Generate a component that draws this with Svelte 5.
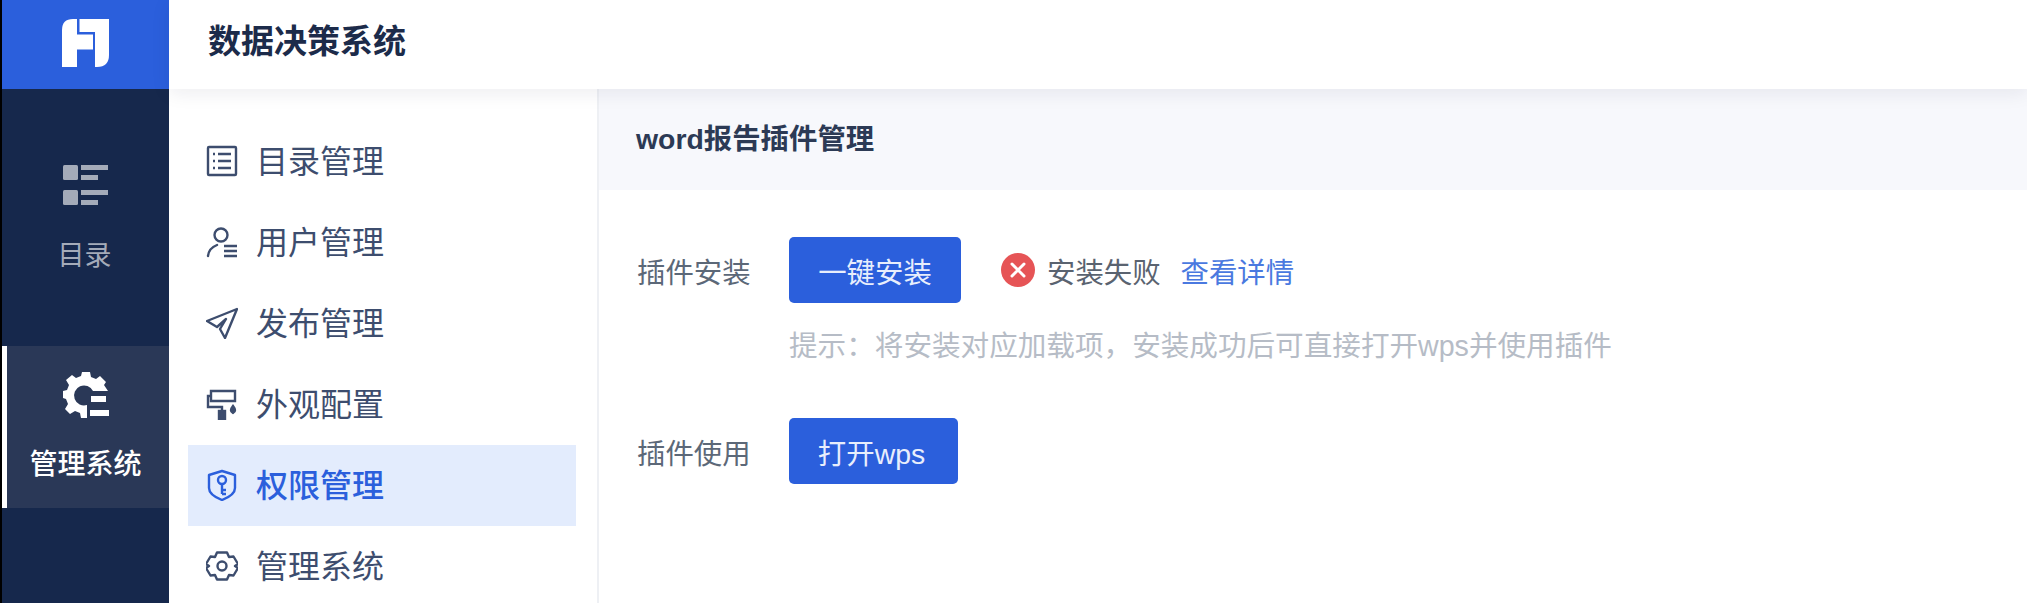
<script lang="ts">
	const menu = [
		{ key: 'catalog', label: '目录管理' },
		{ key: 'user', label: '用户管理' },
		{ key: 'publish', label: '发布管理' },
		{ key: 'theme', label: '外观配置' },
		{ key: 'auth', label: '权限管理', active: true },
		{ key: 'system', label: '管理系统' }
	];
</script>

<div class="app">
	<aside class="rail">
		<div class="logo">
			<svg width="48" height="48" viewBox="0 0 48 48" fill="#fff">
				<path d="M15 0V15.500H31V30.500H15V48H0V11Q0 0 11 0Z" />
				<path d="M17.500 0H47V36Q47 48 35 48H33V13H17.500Z" />
			</svg>
		</div>
		<nav class="rail-nav">
			<div class="rail-item">
				<svg width="46" height="42" viewBox="0 0 46 42" fill="#a4abb9">
					<rect x="1" y="1" width="15" height="15" rx="1.500" />
					<rect x="1" y="26" width="15" height="15" rx="1.500" />
					<rect x="19" y="1" width="27" height="5" />
					<rect x="19" y="11" width="17" height="5" />
					<rect x="19" y="26" width="27" height="5" />
					<rect x="19" y="36" width="17" height="5" />
				</svg>
				<span>目录</span>
			</div>
			<div class="rail-item active">
				<svg width="46" height="46" viewBox="0 0 46 46" fill="#fff">
					<path d="M19 0H27L28 5L33 7L37 4L43 10L41 13L45 19H30A10 10 0 1 0 24 33V46H18L17 41L12 39L7 42L2 37L5 32L3 27L0 26V19L4 18L6 13L3 8L9 3L13 6L18 4Z" />
					<rect x="28" y="24" width="15" height="6" />
					<rect x="27" y="38" width="19" height="6" />
				</svg>
				<span>管理系统</span>
			</div>
		</nav>
	</aside>

	<div class="main">
		<header class="topbar">数据决策系统</header>
		<div class="body">
			<nav class="side">
				{#each menu as item}
					<div class="side-item" class:active={item.active}>
						<svg width="32" height="32" viewBox="0 0 32 32" fill="none" stroke="currentColor" stroke-width="2.400">
							{#if item.key === 'catalog'}
								<rect x="2" y="2" width="28" height="28" rx="1" />
								<path d="M7 9H9M7 16H9M7 23H9M12 9H25M12 16H25M12 23H25" />
							{:else if item.key === 'user'}
								<circle cx="15" cy="9" r="6.500" />
								<path d="M2 30Q3 22 11 19" stroke-linecap="round" />
								<path d="M18 20H31M18 25H31M18 30H31" />
							{:else if item.key === 'publish'}
								<path d="M31 2L1 14L11 20L20 12L14 22L19 31Z" stroke-linejoin="round" />
							{:else if item.key === 'theme'}
								<path d="M5 3H29V13H5ZM5 8H2V19H16V23" />
								<rect x="13" y="23" width="6" height="9" fill="currentColor" />
								<path d="M27 18Q31 23 27 25Q23 23 27 18Z" fill="currentColor" />
							{:else if item.key === 'auth'}
								<path d="M16 2L29 6V19Q29 26 16 31Q3 26 3 19V6Z" stroke-linejoin="round" />
								<circle cx="16" cy="11" r="4" />
								<path d="M16 15V25M16 21H20M16 25H20" />
							{:else}
								<path d="M11 2.500H21L23 7L27.500 6.500L32 14L29 16L32 18L27.500 25.500L23 25L21 29.500H11L9 25L4.500 25.500L0 18L3 16L0 14L4.500 6.500L9 7Z" stroke-linejoin="round" />
								<circle cx="16" cy="16" r="4.500" />
							{/if}
						</svg>
						<span>{item.label}</span>
					</div>
				{/each}
			</nav>

			<section class="panel">
				<h2 class="panel-head">word报告插件管理</h2>
				<div class="panel-body">
					<div class="form-row">
						<span class="form-label">插件安装</span>
						<button class="btn btn-install">一键安装</button>
						<span class="status">
							<svg width="34" height="34" viewBox="0 0 34 34">
								<circle cx="17" cy="17" r="17" fill="#e65456" />
								<path d="M11 11L23 23M23 11L11 23" stroke="#fff" stroke-width="3" stroke-linecap="round" />
							</svg>
							<span class="status-text">安装失败</span>
							<span class="link">查看详情</span>
						</span>
					</div>
					<p class="hint">提示：将安装对应加载项，安装成功后可直接打开wps并使用插件</p>
					<div class="form-row">
						<span class="form-label">插件使用</span>
						<button class="btn btn-open">打开wps</button>
					</div>
				</div>
			</section>
		</div>
	</div>
</div>

<style>
	:global(body) {
		margin: 0;
		background: #fff;
	}

	.app {
		display: flex;
		height: 603px;
		overflow: hidden;
		font-family: 'Liberation Sans', 'Noto Sans CJK SC', sans-serif;
		font-size: 28.400px;
	}

	.rail {
		flex: none;
		width: 167px;
		border-left: 2px solid #000;
		background: #16284c;
	}

	.logo {
		display: flex;
		align-items: center;
		justify-content: center;
		height: 85px;
		padding-bottom: 4px;
		background: #2b5fdc;
	}

	.rail-nav {
		display: flex;
		flex-direction: column;
		gap: 46px;
		padding-top: 49px;
	}

	.rail-item {
		display: flex;
		flex-direction: column;
		align-items: center;
		height: 162px;
		padding: 26px 2px 0 0;
		box-sizing: border-box;
		color: #a4abb9;
		font-size: 27px;
	}

	.rail-item span {
		margin-top: 31px;
		line-height: 38px;
	}

	.rail-item.active {
		border-left: 5px solid #fff;
		padding-right: 5px;
		background: #2a3857;
		color: #fff;
		font-size: 28px;
		font-weight: 500;
	}

	.rail-item.active span {
		margin-top: 28px;
	}

	.main {
		flex: 1;
		min-width: 0;
		display: flex;
		flex-direction: column;
	}

	.topbar {
		flex: none;
		height: 89px;
		line-height: 84px;
		padding-left: 39px;
		font-size: 33px;
		font-weight: 700;
		color: #1c2b4a;
		background: #fff;
		box-shadow: 0 4px 18px rgba(20, 30, 60, 0.08);
		position: relative;
	}

	.body {
		flex: 1;
		display: flex;
		min-height: 0;
	}

	.side {
		flex: none;
		width: 388px;
		padding: 32px 21px 0 19px;
		border-right: 2px solid #eef0f4;
	}

	.side-item {
		display: flex;
		align-items: center;
		gap: 18px;
		height: 81px;
		padding-left: 18px;
		font-size: 32px;
		color: #3d4d6e;
	}

	.side-item svg {
		flex: none;
		margin-top: -1px;
	}

	.side-item span {
		margin-top: -5px;
	}

	.side-item.active {
		background: #e3ecfd;
		color: #2b5fdc;
		font-weight: 500;
	}

	.panel {
		flex: 1;
		min-width: 0;
	}

	.panel-head {
		margin: 0;
		height: 101px;
		line-height: 100px;
		padding-left: 37px;
		font-size: 28.400px;
		font-weight: 600;
		color: #2c3a55;
		background: #f7f8fc;
	}

	.panel-body {
		padding: 47px 0 0 38px;
	}

	.form-row {
		display: flex;
		align-items: center;
	}

	.form-label {
		width: 152px;
		flex: none;
		color: #5c6878;
	}

	.btn {
		height: 66px;
		padding: 0;
		border: none;
		border-radius: 5px;
		background: #2b5fdc;
		color: #e8eefc;
		font: inherit;
	}

	.btn-install {
		width: 172px;
	}

	.btn-open {
		width: 169px;
		padding-right: 4px;
	}

	.status {
		display: flex;
		align-items: center;
		margin-left: 40px;
	}

	.status-text {
		margin-left: 12px;
		color: #5a6370;
	}

	.link {
		margin-left: 20px;
		color: #4a79e0;
	}

	.hint {
		margin: 23px 0 52px 152px;
		line-height: 40px;
		font-size: 28.600px;
		color: #b6bcc6;
	}
</style>
